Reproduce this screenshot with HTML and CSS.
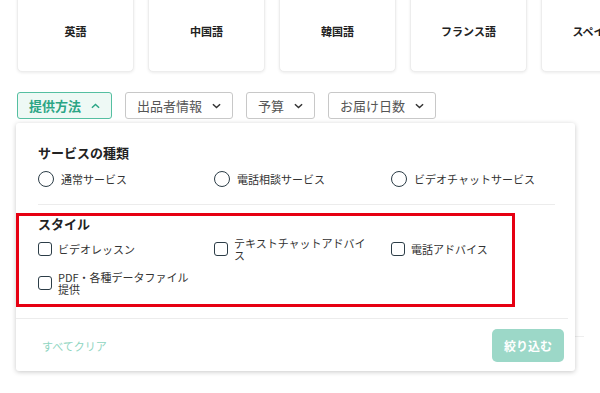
FILE: index.html
```html
<!DOCTYPE html>
<html lang="ja">
<head>
    <meta charset="UTF-8">
    <meta name="viewport" content="width=device-width, initial-scale=1.0">
    <title>カテゴリ検索 | 語学</title>
    <link rel="stylesheet" href="styles.css">
</head>
<body>

    <div class="page">
        <div class="cards">
            <div class="card">英語</div>
            <div class="card">中国語</div>
            <div class="card">韓国語</div>
            <div class="card">フランス語</div>
            <div class="card">スペイン語</div>
        </div>

        <div class="filters">
            <button class="filter is-open">提供方法
                <svg class="chevron" viewBox="0 0 10 6"><path d="M1 5L5 1.2L9 5"/></svg>
            </button>
            <button class="filter">出品者情報
                <svg class="chevron" viewBox="0 0 10 6"><path d="M1 1L5 4.8L9 1"/></svg>
            </button>
            <button class="filter">予算
                <svg class="chevron" viewBox="0 0 10 6"><path d="M1 1L5 4.8L9 1"/></svg>
            </button>
            <button class="filter">お届け日数
                <svg class="chevron" viewBox="0 0 10 6"><path d="M1 1L5 4.8L9 1"/></svg>
            </button>

            <div class="dropdown">
                <div class="section">
                    <h3>サービスの種類</h3>
                    <div class="options">
                        <label class="option"><span class="radio"></span><span class="text">通常サービス</span></label>
                        <label class="option"><span class="radio"></span><span class="text">電話相談サービス</span></label>
                        <label class="option"><span class="radio"></span><span class="text">ビデオチャットサービス</span></label>
                    </div>
                    <hr class="divider">
                    <h3 class="style-title">スタイル</h3>
                    <div class="options checks">
                        <label class="option"><span class="check"></span><span class="text">ビデオレッスン</span></label>
                        <label class="option"><span class="check"></span><span class="text">テキストチャットアドバイス</span></label>
                        <label class="option"><span class="check"></span><span class="text">電話アドバイス</span></label>
                        <label class="option"><span class="check"></span><span class="text">PDF・各種データファイル提供</span></label>
                    </div>
                </div>

                <div class="dropdown-footer">
                    <a class="clear">すべてクリア</a>
                    <button class="apply">絞り込む</button>
                </div>

                <!-- annotation box -->
                <div class="highlight"></div>
            </div>
        </div>

        <div class="results"></div>
    </div>

</body>
</html>
```

FILE: styles.css
```css
body {
    font-family: "Noto Sans CJK JP", "Noto Sans", sans-serif;
    background-color: #fff;
    color: #333;
    margin: 0;
    padding: 0;
}
.page {
    padding: 0 16px;
    height: 393px;
    overflow: hidden;
}
.cards {
    display: flex;
    gap: 14px;
    margin-top: -40px;
    padding-left: 1px;
}
.card {
    flex-shrink: 0;
    box-sizing: border-box;
    width: 117px;
    height: 112px;
    padding-top: 30px;
    display: flex;
    align-items: center;
    justify-content: center;
    background: #fff;
    border: 1px solid #ededed;
    border-radius: 5px;
    box-shadow: 0 1px 3px rgba(0, 0, 0, 0.08);
    font-size: 11px;
    font-weight: bold;
    color: #222;
}
.filters {
    position: relative;
    display: flex;
    gap: 13px;
    margin-top: 20px;
    padding-left: 1px;
}
.filter {
    display: flex;
    align-items: center;
    gap: 10px;
    height: 27px;
    padding: 0 11px;
    font-family: inherit;
    font-size: 13px;
    color: #555;
    background: #fff;
    border: 1px solid #c8c8c8;
    border-radius: 3px;
    cursor: pointer;
}
.filter.is-open {
    color: #2ba585;
    font-weight: bold;
    background: #eef9f5;
    border-color: #55bfa1;
}
.chevron {
    width: 9px;
    height: 6px;
    fill: none;
    stroke: #333;
    stroke-width: 1.6;
}
.is-open .chevron {
    stroke: #2ba585;
}
.dropdown {
    position: absolute;
    top: 31px;
    left: 0;
    width: 559px;
    background: #fff;
    border-radius: 3px;
    box-shadow: 0 1px 5px rgba(0, 0, 0, 0.22);
    z-index: 2;
}
.section {
    padding: 21px 20px 23px 22px;
}
h3 {
    margin: 0;
    font-size: 13px;
    line-height: 18px;
    font-weight: bold;
    color: #222;
}
.options {
    display: grid;
    grid-template-columns: 176px 177px 1fr;
    margin-top: 9px;
}
.option {
    display: flex;
    align-items: center;
    gap: 7px;
    font-size: 11px;
    line-height: 16px;
    color: #333;
}
.radio {
    flex-shrink: 0;
    box-sizing: border-box;
    width: 16px;
    height: 16px;
    border: 1.5px solid #2c3d47;
    border-radius: 50%;
}
.divider {
    margin: 17px 0 0;
    border: none;
    border-top: 1px solid #ececec;
}
.style-title {
    margin-top: 10px;
}
.checks {
    margin-top: 4px;
    row-gap: 10px;
}
.checks .option {
    gap: 6px;
    min-height: 24px;
    line-height: 12px;
}
.checks .text {
    max-width: 136px;
}
.check {
    flex-shrink: 0;
    box-sizing: border-box;
    width: 14px;
    height: 14px;
    border: 1.5px solid #2c3d47;
    border-radius: 3px;
}
.dropdown-footer {
    display: flex;
    align-items: center;
    justify-content: space-between;
    margin-right: 7px;
    padding: 10px 4px 9px 26px;
    border-top: 1px solid #ececec;
}
.clear {
    font-size: 11px;
    color: #8fd5c1;
}
.apply {
    width: 72px;
    height: 33px;
    font-family: inherit;
    font-size: 12px;
    font-weight: bold;
    color: #fff;
    background-color: #9cd8c8;
    border: none;
    border-radius: 5px;
}
.highlight {
    position: absolute;
    top: 90px;
    left: 0;
    width: 499px;
    height: 94px;
    box-sizing: border-box;
    border: 3px solid #e60012;
    pointer-events: none;
}
.results {
    margin-top: 217px;
    border-top: 1px solid #eeeeee;
}
```
